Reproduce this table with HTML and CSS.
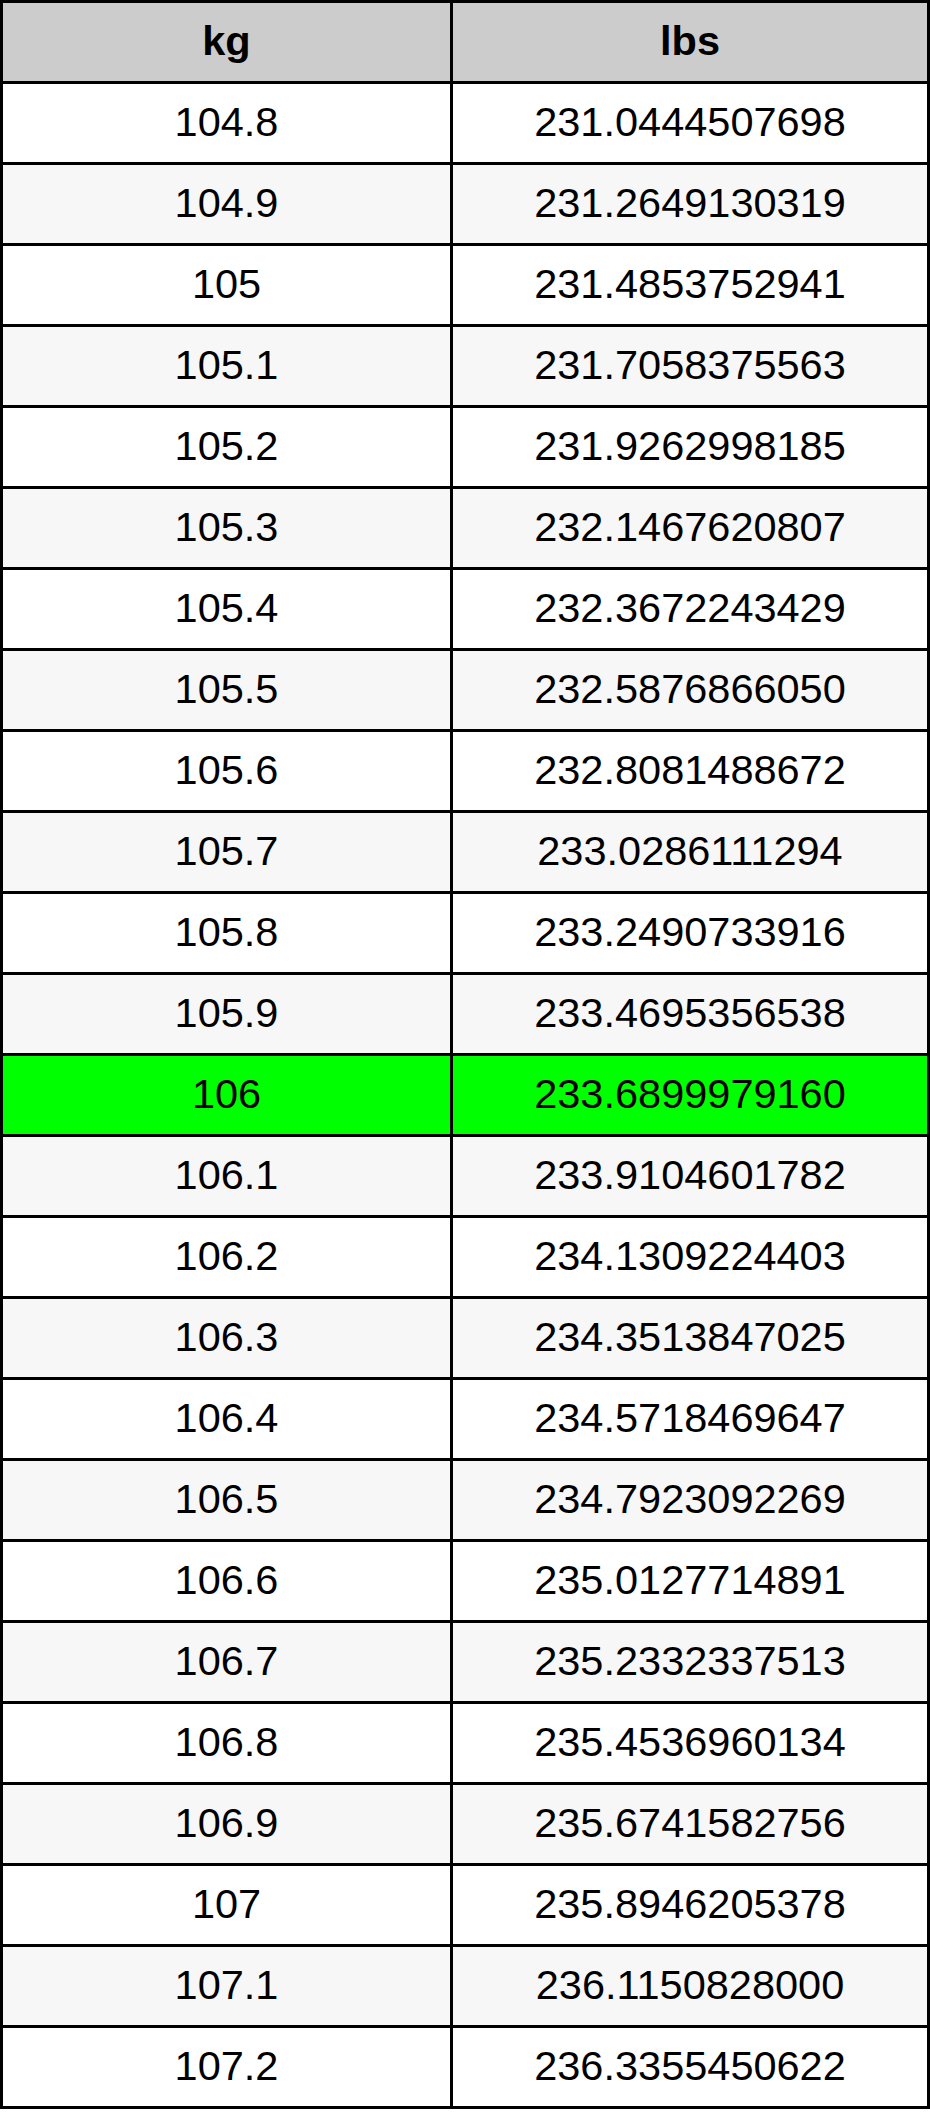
FILE: index.html
```html
<!DOCTYPE html>
<html>
<head>
<meta charset="utf-8">
<link rel="stylesheet" href="styles.css">
</head>
<body>
<table class="conv">
<thead>
<tr><th class="c1">kg</th><th class="c2">lbs</th></tr>
</thead>
<tbody>
<tr><td>104.8</td><td>231.0444507698</td></tr>
<tr><td>104.9</td><td>231.2649130319</td></tr>
<tr><td>105</td><td>231.4853752941</td></tr>
<tr><td>105.1</td><td>231.7058375563</td></tr>
<tr><td>105.2</td><td>231.9262998185</td></tr>
<tr><td>105.3</td><td>232.1467620807</td></tr>
<tr><td>105.4</td><td>232.3672243429</td></tr>
<tr><td>105.5</td><td>232.5876866050</td></tr>
<tr><td>105.6</td><td>232.8081488672</td></tr>
<tr><td>105.7</td><td>233.0286111294</td></tr>
<tr><td>105.8</td><td>233.2490733916</td></tr>
<tr><td>105.9</td><td>233.4695356538</td></tr>
<tr class="hl"><td>106</td><td>233.6899979160</td></tr>
<tr><td>106.1</td><td>233.9104601782</td></tr>
<tr><td>106.2</td><td>234.1309224403</td></tr>
<tr><td>106.3</td><td>234.3513847025</td></tr>
<tr><td>106.4</td><td>234.5718469647</td></tr>
<tr><td>106.5</td><td>234.7923092269</td></tr>
<tr><td>106.6</td><td>235.0127714891</td></tr>
<tr><td>106.7</td><td>235.2332337513</td></tr>
<tr><td>106.8</td><td>235.4536960134</td></tr>
<tr><td>106.9</td><td>235.6741582756</td></tr>
<tr><td>107</td><td>235.8946205378</td></tr>
<tr><td>107.1</td><td>236.1150828000</td></tr>
<tr><td>107.2</td><td>236.3355450622</td></tr>
</tbody>
</table>
</body>
</html>
```

FILE: styles.css
```css
html, body {
  margin: 0;
  padding: 0;
  background: #ffffff;
}

.conv {
  border-collapse: separate;
  border-spacing: 0;
  table-layout: fixed;
  width: 930px;
  border-top: 3px solid #000;
  border-left: 3px solid #000;
  font-family: "Liberation Sans", Arial, sans-serif;
  font-size: 41.5px;
  color: #000;
}

.conv th,
.conv td {
  padding: 0 0 2px 0;
  line-height: 76px;
  height: 76px;
  text-align: center;
  border-right: 3px solid #000;
  border-bottom: 3px solid #000;
  white-space: nowrap;
  overflow: hidden;
}

.conv th {
  background: #cccccc;
  font-weight: bold;
}

.conv .c1 {
  width: 447px;
}

.conv .c2 {
  width: 474px;
}

.conv tbody tr:nth-child(odd) td {
  background: #ffffff;
}

.conv tbody tr:nth-child(even) td {
  background: #f7f7f7;
}

.conv tbody tr.hl td {
  background: #00ff00;
}
```
